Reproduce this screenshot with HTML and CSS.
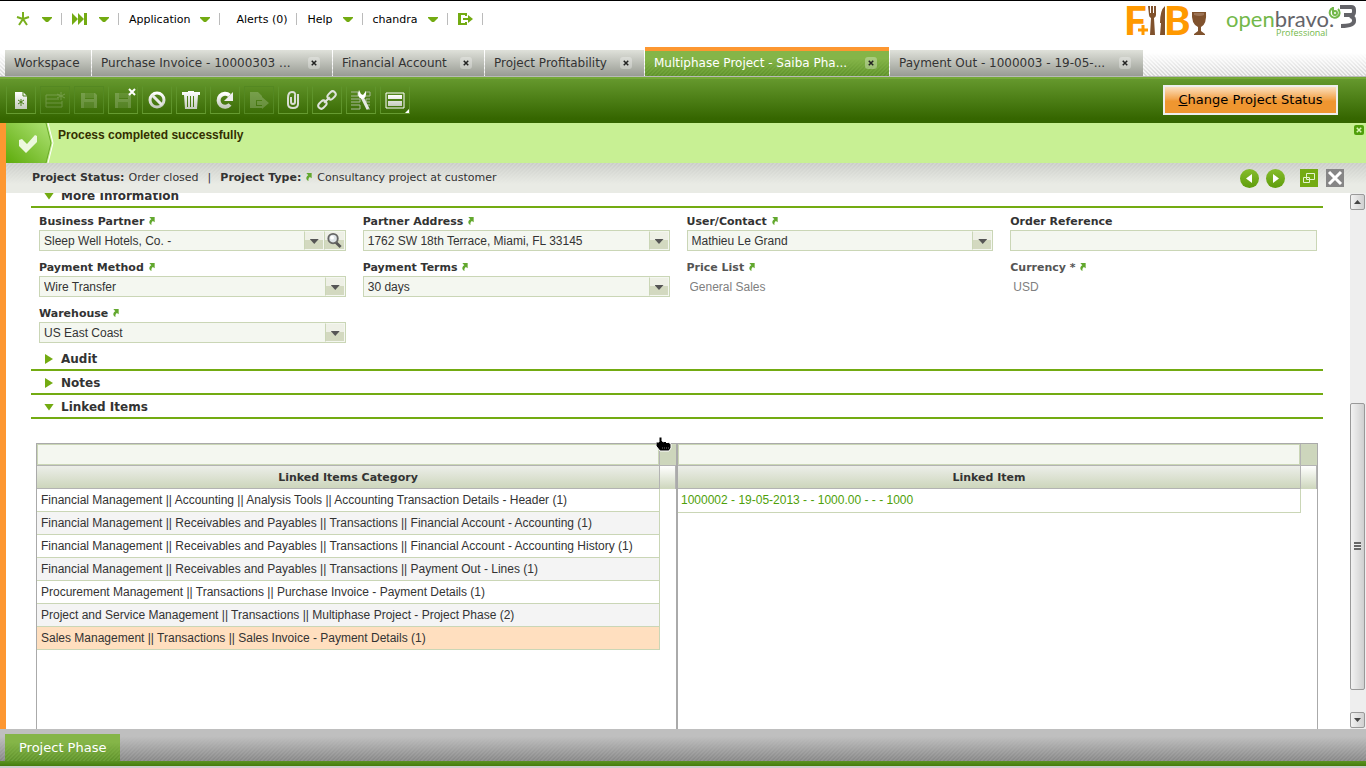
FILE: index.html
```
<!DOCTYPE html>
<html lang="en">
<head>
  <meta charset="UTF-8" />
  <meta name="viewport" content="width=device-width, initial-scale=1.0" />
  <title>Multiphase Project - Openbravo</title>
  <link rel="stylesheet" href="styles.css">
</head>

<body>

<!-- Shared icon shapes -->
<svg class="sprite" aria-hidden="true">
  <symbol id="down" viewBox="0 0 10 5"><path d="M0 0h10v1L6 5H4L0 1z" fill="#73ab12"/></symbol>
  <symbol id="goto" viewBox="0 0 8 9"><path d="M1 0h6v6L5 4.500C3.500 5.500 3 7 3.500 9 0 7.500 .5 4 3.200 2.500z" fill="#62a82e"/></symbol>
  <symbol id="cross" viewBox="0 0 8 8"><path d="M1 1l6 6M7 1L1 7" fill="none" stroke="currentColor" stroke-width="2"/></symbol>
  <linearGradient id="metal" x1="0" y1="0" x2="0" y2="1">
    <stop offset="0" stop-color="#fff"/>
    <stop offset="1" stop-color="#c4cbbd"/>
  </linearGradient>
</svg>

<!-- Top menu and logos -->
<header>
  <nav class="menu">
    <button class="menu-item icon-item" aria-label="Create new">
      <svg width="14" height="14" viewBox="0 0 14 14"><path d="M7 7V0M7 7l6-2M7 7l4 6M7 7l-4 6M7 7L1 5" stroke="#79af1d" stroke-width="2" fill="none"/></svg>
      <svg class="caret"><use href="#down"/></svg>
    </button>
    <button class="menu-item icon-item" aria-label="Quick launch">
      <svg width="15" height="12" viewBox="0 0 15 12"><path d="M0 0l6 6V0l6 6V0h3v12h-3V6l-6 6V6l-6 6z" fill="#73ab12"/></svg>
      <svg class="caret"><use href="#down"/></svg>
    </button>
    <button class="menu-item">Application <svg class="caret"><use href="#down"/></svg></button>
    <button class="menu-item alerts">Alerts (0)</button>
    <button class="menu-item">Help <svg class="caret"><use href="#down"/></svg></button>
    <button class="menu-item">chandra <svg class="caret"><use href="#down"/></svg></button>
    <button class="menu-item" aria-label="Log out">
      <svg width="15" height="12" viewBox="0 0 15 12"><path d="M9 0H0v12h9V9H7v1H3V2h4v1h2zM5 5h5V2l5 4-5 4V7H5z" fill="#73ab12"/></svg>
    </button>
  </nav>
  <div class="logos">
    <svg width="81" height="32" viewBox="0 0 81 32" role="img" aria-label="F and B">
      <g class="logo-fb">
        <text x="-3" y="30">F</text>
        <text x="37" y="30">B</text>
      </g>
      <path d="M16 19v12M10 25h12" stroke="#fff" stroke-width="5"/>
      <path d="M16 20v10M11 25h10" stroke="#ff9900" stroke-width="3"/>
      <path d="M21 1h2v7h1V1h2v7h1V1h2v9q0 2-2 3l1 17h-5l1-17q-2-1-2-3zM38 1q-5 4-5 17h1l-1 12h5z" fill="#80522d"/>
      <path d="M65 7h14q1 12-5 15v4l4 3v1H67v-1l4-3v-4q-7-3-6-15z" fill="#80522d"/>
      <path d="M67 8h10v2q-4 2-10 0z" fill="#9c7456"/>
    </svg>
    <svg width="132" height="34" viewBox="0 0 132 34" role="img" aria-label="openbravo 3 Professional">
      <text x="0" y="22" class="logo-open">open<tspan class="logo-bravo">bravo.</tspan></text>
      <text x="50" y="31" class="logo-edition">Professional</text>
      <path d="M107 3a5 5 0 1 0 5 1" fill="none" stroke="#73b84a" stroke-width="2"/>
      <path d="M107 2v6" stroke="#73b84a" stroke-width="2"/>
      <circle cx="109" cy="8" r="2" fill="none" stroke="#73b84a" stroke-width="2"/>
      <path d="M114 2h11q3 0 3 3v2q0 3-3 3h-7" fill="none" stroke="#646469" stroke-width="4"/>
      <path d="M124 11q4 1 4 4v1q0 5-13 5" fill="none" stroke="#646469" stroke-width="4"/>
    </svg>
  </div>
</header>

<!-- Open tabs -->
<nav class="tabs">
  <a class="tab tab-xs" href="#">Workspace</a>
  <div class="tab tab-l"><a href="#">Purchase Invoice - 10000303 ...</a><button aria-label="Close tab"><svg><use href="#cross"/></svg></button></div>
  <div class="tab tab-s"><a href="#">Financial Account</a><button aria-label="Close tab"><svg><use href="#cross"/></svg></button></div>
  <div class="tab tab-m"><a href="#">Project Profitability</a><button aria-label="Close tab"><svg><use href="#cross"/></svg></button></div>
  <div class="tab tab-l active"><a href="#">Multiphase Project - Saiba Pha...</a><button aria-label="Close tab"><svg><use href="#cross"/></svg></button></div>
  <div class="tab tab-xl"><a href="#">Payment Out - 1000003 - 19-05-...</a><button aria-label="Close tab"><svg><use href="#cross"/></svg></button></div>
</nav>

<!-- Toolbar -->
<div class="toolbar">
  <button class="tool" aria-label="New"><svg viewBox="0 0 20 20"><path d="M4 2h8l4 4v13H4z" fill="url(#metal)"/><path d="M12 2v4h4" fill="none" stroke="#4b8019"/><path d="M10 9v7M7 10l6 4M13 10l-6 4" stroke="#4b8019"/></svg></button>
  <button class="tool" disabled aria-label="New in grid"><svg viewBox="0 0 20 20"><path d="M1 5h14M1 5v12h16v-6M1 9h13M1 13h16M16 2v8M12 4l8 4M20 4l-8 4" fill="none" stroke="#fff"/></svg></button>
  <button class="tool" disabled aria-label="Save"><svg viewBox="0 0 20 20"><path d="M2 3h14l2 2v13H2zM6 3v6h9V3zM5 12v6h10v-6z" fill="#fff" fill-rule="evenodd"/><path d="M5 3h11v5H5zM5 12h11v6H5z" fill="#fff" opacity=".5"/></svg></button>
  <button class="tool" aria-label="Save and close"><svg viewBox="0 0 20 20" class="dim"><path d="M2 3h14l2 2v13H2zM6 3v6h9V3zM5 12v6h10v-6z" fill="#fff" fill-rule="evenodd"/><path d="M5 3h11v5H5zM5 12h11v6H5z" fill="#fff" opacity=".5"/></svg><svg class="corner-cross"><use href="#cross"/></svg></button>
  <button class="tool" aria-label="Undo"><svg viewBox="0 0 20 20"><circle cx="10" cy="10" r="7" fill="none" stroke="url(#metal)" stroke-width="3"/><path d="M5 5l10 10" stroke="#e8ebe5" stroke-width="3"/></svg></button>
  <button class="tool" aria-label="Delete"><svg viewBox="0 0 20 20"><path d="M1 2h6V1h6v1h6v3h-2l-1 14H4L3 5H1zM6 6v11h1V6zM9 6v11h1V6zM12 6v11h1V6z" fill="url(#metal)" fill-rule="evenodd"/></svg></button>
  <button class="tool" aria-label="Refresh"><svg viewBox="0 0 20 20"><path d="M15 14.500A6.500 6.500 0 1 1 14.500 5.500" fill="none" stroke="url(#metal)" stroke-width="4"/><path d="M18 2v9H9z" fill="#eee"/></svg></button>
  <button class="tool" disabled aria-label="Export"><svg viewBox="0 0 20 20"><path d="M1 2h8l4 4v4H7v6h6v2H1zM13 7l7 6-7 6v-4H8v-4h5z" fill="#fff"/></svg></button>
  <button class="tool" aria-label="Attach"><svg viewBox="0 0 20 20"><path d="M15 4v10q0 4-5 4t-5-4V8M5 8q0-6 4-6t3 4v6q0 2-2 2t-2-2V7" fill="none" stroke="#d9ded4" stroke-width="2"/></svg></button>
  <button class="tool" aria-label="Link"><svg viewBox="0 0 20 20"><g fill="none" stroke="#dfe3db" stroke-width="2" transform="rotate(-45 10 10)"><rect x="-1" y="7" width="9" height="6" rx="3"/><rect x="12" y="7" width="9" height="6" rx="3"/><path d="M6 10h8"/></g></svg></button>
  <button class="tool" aria-label="Settings"><svg viewBox="0 0 20 20"><path d="M0 2h7v4H0M14 2h5v4h-5M0 9h9v3H0M0 15h9v4H0M19 9h-4v3h4M19 15h-3v4h3" fill="none" stroke="#a9b99b"/><path d="M11 7l6 12" stroke="#e6e9e3" stroke-width="3"/><path d="M8 0q-3 7 3 9 5-1 4-8l-3 4-2-1z" fill="#fff"/></svg></button>
  <button class="tool more" aria-label="View"><svg viewBox="0 0 20 20"><path d="M1 3h18v15H1z" fill="none" stroke="#fff"/><path d="M3 5h14v4H3zM3 11h14v5H3z" fill="url(#metal)"/></svg></button>
  <button class="process-button"><u>C</u>hange Project Status</button>
</div>

<main>
  <!-- Result message -->
  <div class="message" role="status">
    <svg width="48" height="40" viewBox="0 0 48 40">
      <linearGradient id="flag" x1="0" y1="1" x2="1" y2="0"><stop offset="0" stop-color="#5dab0b"/><stop offset="1" stop-color="#b0e376"/></linearGradient>
      <path d="M0 0h40l5 20-5 20H0z" fill="url(#flag)"/>
      <path d="M40 0l5 20-5 20" fill="none" stroke="#67a925"/>
      <path d="M42 0l5 20-5 20" fill="none" stroke="#fff"/>
      <path d="M13 17l3-1 5 5 8-9 2 1v6L20 30l-7-7z" fill="#edf8df"/>
    </svg>
    <strong>Process completed successfully</strong>
    <button class="message-close" aria-label="Close message"><svg><use href="#cross"/></svg></button>
  </div>

  <!-- Record status bar -->
  <div class="status">
    <p><b>Project Status:</b> <span>Order closed</span> <span class="divider">|</span> <b>Project Type:</b> <svg class="goto"><use href="#goto"/></svg> <span>Consultancy project at customer</span></p>
    <button class="round" aria-label="Previous record"><svg viewBox="0 0 19 19"><path d="M12 5v9L6 9.500z" fill="#fff"/></svg></button>
    <button class="round" aria-label="Next record"><svg viewBox="0 0 19 19"><path d="M7 5v9l6-4.500z" fill="#fff"/></svg></button>
    <button class="square" aria-label="Maximize"><svg viewBox="0 0 18 18"><path d="M6.500 4.500h8v6h-8zM3.500 8.500h6v5h-6z" fill="none" stroke="#e4f3d0"/></svg></button>
    <button class="square close-form" aria-label="Close record"><svg viewBox="0 0 18 18"><path d="M3 3l12 12M15 3L3 15" stroke="#fff" stroke-width="3"/></svg></button>
  </div>

  <div class="scroll">
    <div class="form">
      <h2 class="section"><span class="arrow open"></span>More Information</h2>
      <div class="fields">
        <div class="field">
          <label for="partner">Business Partner <svg class="goto"><use href="#goto"/></svg></label>
          <div class="combo">
            <select id="partner"><option>Sleep Well Hotels, Co. -</option></select><span class="picker"></span>
            <button class="search" aria-label="Search partner"><svg viewBox="0 0 18 18"><path d="M10 10l6 6" stroke="#555" stroke-width="3"/><circle cx="8" cy="7" r="5" fill="#dfe5e8" stroke="#666" stroke-width="2"/><circle cx="7" cy="6" r="2" fill="#fff"/></svg></button>
          </div>
        </div>
        <div class="field">
          <label for="address">Partner Address <svg class="goto"><use href="#goto"/></svg></label>
          <div class="combo"><select id="address"><option>1762 SW 18th Terrace, Miami, FL 33145</option></select><span class="picker"></span></div>
        </div>
        <div class="field">
          <label for="contact">User/Contact <svg class="goto"><use href="#goto"/></svg></label>
          <div class="combo"><select id="contact"><option>Mathieu Le Grand</option></select><span class="picker"></span></div>
        </div>
        <div class="field">
          <label for="reference">Order Reference</label>
          <div class="combo"><input type="text" id="reference" /></div>
        </div>
        <div class="field">
          <label for="method">Payment Method <svg class="goto"><use href="#goto"/></svg></label>
          <div class="combo"><select id="method"><option>Wire Transfer</option></select><span class="picker"></span></div>
        </div>
        <div class="field">
          <label for="terms">Payment Terms <svg class="goto"><use href="#goto"/></svg></label>
          <div class="combo"><select id="terms"><option>30 days</option></select><span class="picker"></span></div>
        </div>
        <div class="field readonly">
          <label for="pricelist">Price List <svg class="goto"><use href="#goto"/></svg></label>
          <div class="combo"><input type="text" id="pricelist" value="General Sales" readonly /></div>
        </div>
        <div class="field readonly">
          <label for="currency">Currency * <svg class="goto"><use href="#goto"/></svg></label>
          <div class="combo"><input type="text" id="currency" value="USD" readonly /></div>
        </div>
        <div class="field">
          <label for="warehouse">Warehouse <svg class="goto"><use href="#goto"/></svg></label>
          <div class="combo"><select id="warehouse"><option>US East Coast</option></select><span class="picker"></span></div>
        </div>
      </div>
      <h2 class="section"><span class="arrow"></span>Audit</h2>
      <h2 class="section"><span class="arrow"></span>Notes</h2>
      <h2 class="section"><span class="arrow open"></span>Linked Items</h2>

      <!-- Linked items grids -->
      <div class="linked">
        <div class="pane">
          <table>
            <thead>
              <tr class="filter"><td><input type="text" aria-label="Filter category" /></td><td class="gutter"></td></tr>
              <tr><th>Linked Items Category</th><th class="gutter"></th></tr>
            </thead>
            <tbody>
              <tr><td>Financial Management || Accounting || Analysis Tools || Accounting Transaction Details - Header (1)</td></tr>
              <tr><td>Financial Management || Receivables and Payables || Transactions || Financial Account - Accounting (1)</td></tr>
              <tr><td>Financial Management || Receivables and Payables || Transactions || Financial Account - Accounting History (1)</td></tr>
              <tr><td>Financial Management || Receivables and Payables || Transactions || Payment Out - Lines (1)</td></tr>
              <tr><td>Procurement Management || Transactions || Purchase Invoice - Payment Details (1)</td></tr>
              <tr><td>Project and Service Management || Transactions || Multiphase Project - Project Phase (2)</td></tr>
              <tr class="selected"><td>Sales Management || Transactions || Sales Invoice - Payment Details (1)</td></tr>
            </tbody>
          </table>
          <svg class="pointer" viewBox="0 0 16 16"><path d="M3 1h3v4l2 1 1-1 2 2 1-1 3 2v4l-2 3H4L0 10V6h3z" fill="#000" stroke="#fff"/><path d="M6 12h7" stroke="#777" stroke-dasharray="1 1"/></svg>
        </div>
        <div class="pane">
          <table>
            <thead>
              <tr class="filter"><td><input type="text" aria-label="Filter item" /></td><td class="gutter"></td></tr>
              <tr><th>Linked Item</th><th class="gutter"></th></tr>
            </thead>
            <tbody>
              <tr><td class="item"><a href="#">1000002 - 19-05-2013 - - 1000.00 - - - 1000</a></td></tr>
            </tbody>
          </table>
        </div>
      </div>
    </div>

    <div class="scrollbar" aria-hidden="true">
      <span class="scroll-button"><i class="up"></i></span>
      <span class="track-before"></span>
      <span class="thumb"><i></i></span>
      <span class="track-after"></span>
      <span class="scroll-button"><i class="dn"></i></span>
    </div>
  </div>
</main>

<!-- Child tabs -->
<footer>
  <button class="child-tab">Project Phase</button>
</footer>

</body>
</html>
```
FILE: styles.css
```
/* =========================
   General Page Styling
   ========================= */
* {
  box-sizing: border-box;
}

body {
  margin: 0;
  height: 100vh;
  display: flex;
  flex-direction: column;
  overflow: hidden;
  border-top: 1px solid #000;
  font-family: "DejaVu Sans", sans-serif;
  font-size: 11px;
  color: #333;
  background-color: #fff;
}

button {
  margin: 0;
  padding: 0;
  border: none;
  background: none;
  font: inherit;
  color: inherit;
  cursor: pointer;
}

a {
  color: inherit;
  text-decoration: none;
}

svg {
  display: block;
}

.sprite {
  position: absolute;
  width: 0;
  height: 0;
}

/* =========================
   Header
   ========================= */
header {
  display: flex;
  justify-content: space-between;
  height: 46px;
  flex: none;
}

.menu {
  display: flex;
  align-items: center;
  height: 36px;
  padding-left: 6px;
  color: #000;
}

.menu-item {
  display: flex;
  align-items: center;
  gap: 10px;
  height: 12px;
  padding: 0 9px 0 10px;
  border-right: 1px solid #bbb;
}

.menu-item.icon-item {
  gap: 12px;
}

.menu-item.alerts {
  padding-left: 16px;
}

.caret {
  width: 10px;
  height: 5px;
}

.logos {
  display: flex;
  gap: 18px;
  padding: 4px 8px 0 0;
}

.logos svg {
  overflow: visible;
}

.logo-fb {
  font: 900 40px Lato, sans-serif;
  fill: #ff9900;
}

.logo-open {
  font: 22px Lato, sans-serif;
  fill: #73b84a;
}

.logo-bravo {
  fill: #646469;
}

.logo-edition {
  font: 9px "Open Sans", sans-serif;
  fill: #73b84a;
}

/* =========================
   Tabs
   ========================= */
.tabs {
  display: flex;
  align-items: flex-end;
  gap: 1px;
  flex: none;
  height: 30px;
  padding-left: 5px;
  border-bottom: 1px solid #b9bab8;
  font-size: 12px;
  background:
    linear-gradient(#fff 20%, rgba(255, 255, 255, 0.2)),
    linear-gradient(45deg, #ccc 25%, #eee 25% 50%, #ccc 50% 75%, #eee 75%) 0 0 / 4px 4px;
}

.tab {
  display: flex;
  align-items: center;
  justify-content: space-between;
  height: 26px;
  padding: 0 12px 0 9px;
  white-space: nowrap;
  background: linear-gradient(#dfe1da, #989b93);
}

.tab-xs {
  width: 86px;
}

.tab-s {
  width: 151px;
}

.tab-m {
  width: 159px;
}

.tab-l {
  width: 240px;
}

.tab-xl {
  width: 253px;
}

.tab.active {
  width: 244px;
  height: 29px;
  padding-bottom: 1px;
  border-top: 4px solid #fd9731;
  color: #fff;
  background:
    linear-gradient(#85b548 30%, rgba(110, 160, 55, 0.5)),
    linear-gradient(-45deg, #4f821f 25%, #679c35 25% 50%, #4f821f 50% 75%, #679c35 75%) 0 0 / 4px 4px;
}

.tab button {
  width: 12px;
  height: 12px;
  padding: 3px;
  border-radius: 3px;
  color: #222;
  background-color: rgba(255, 255, 255, 0.3);
}

.tab button svg {
  width: 6px;
  height: 6px;
}

/* =========================
   Toolbar
   ========================= */
.toolbar {
  display: flex;
  align-items: center;
  gap: 4px;
  flex: none;
  height: 46px;
  padding: 0 28px 2px 6px;
  border-top: 2px solid #75a937;
  background: linear-gradient(#65982d, #356600 90%);
}

.tool {
  position: relative;
  width: 30px;
  height: 28px;
  padding: 3px 4px;
  border: 1px solid;
  border-color: #5a8f25 #5f942b #669b31;
}

.tool svg {
  width: 20px;
  height: 20px;
}

.tool:disabled {
  border-color: #548822;
}

.tool:disabled svg,
.tool .dim {
  opacity: 0.2;
}

.tool .corner-cross {
  position: absolute;
  top: 1px;
  right: 1px;
  width: 8px;
  height: 8px;
  color: #fff;
}

.tool.more::after {
  content: "";
  position: absolute;
  right: 0;
  bottom: 0;
  border: 2px solid;
  border-color: transparent #fff #fff transparent;
}

.process-button {
  width: 175px;
  height: 30px;
  margin-left: auto;
  border: 2px solid #eee;
  font-size: 13px;
  line-height: 24px;
  color: #000;
  background: linear-gradient(#fce0bf, #f3a650 45%, #ef9630 55%);
}

/* =========================
   Message and Status
   ========================= */
main {
  display: flex;
  flex-direction: column;
  flex: 1;
  min-height: 0;
  border-left: 6px solid #fd9731;
}

.message {
  display: flex;
  flex: none;
  gap: 4px;
  height: 40px;
  background-color: #c8f094;
}

.message strong {
  flex: 1;
  padding-top: 5px;
  font: bold 12px/14px "Liberation Sans", sans-serif;
  color: #332f00;
}

.message-close {
  width: 10px;
  height: 10px;
  margin: 2px 2px 0 0;
  padding: 2px;
  border-radius: 2px;
  color: #d8f5b5;
  background-color: #4f9f0a;
}

.message-close svg {
  width: 6px;
  height: 6px;
}

.status {
  display: flex;
  align-items: center;
  flex: none;
  height: 30px;
  padding: 0 22px 0 26px;
  background:
    linear-gradient(rgba(200, 202, 198, 0.7), #e9ebe5 70%),
    linear-gradient(-45deg, #d0d2cd 25%, #e9ebe5 25% 50%, #d0d2cd 50% 75%, #e9ebe5 75%) 0 0 / 4px 4px;
}

.status p {
  display: flex;
  align-items: center;
  gap: 4px;
  flex: 1;
  margin: 0;
  padding-bottom: 2px;
}

.status .divider {
  padding: 0 5px;
}

.goto {
  display: inline-block;
  width: 8px;
  height: 8px;
}

.round {
  width: 19px;
  height: 19px;
  margin-right: 7px;
  border-radius: 50%;
  background: linear-gradient(#86bd2c, #5f9d0c);
}

.square {
  width: 18px;
  height: 18px;
  margin-left: 8px;
  background-color: #73ab12;
}

.close-form {
  background-color: #868686;
}

/* =========================
   Form
   ========================= */
.scroll {
  display: flex;
  flex: 1;
  min-height: 0;
  overflow: hidden;
}

.form {
  flex: 1;
  min-width: 0;
  margin-top: -9px;
  padding: 0 27px 0 25px;
}

.section {
  display: flex;
  align-items: center;
  height: 24px;
  margin: 0;
  padding: 2px 0 0 12px;
  border-bottom: 2px solid #73ab12;
  font-size: 12px;
}

.arrow {
  width: 18px;
}

.arrow::before {
  content: "";
  display: block;
  width: 8px;
  height: 10px;
  margin-left: 2px;
  background-color: #73ab12;
  clip-path: polygon(0 0, 100% 50%, 0 100%);
}

.arrow.open::before {
  width: 10px;
  height: 7px;
  margin-left: 1px;
  clip-path: polygon(0 0, 100% 0, 50% 100%);
}

.fields {
  display: grid;
  grid-template-columns: repeat(4, 1fr);
  gap: 3px 17px;
  padding: 0 6px 4px 8px;
}

.field label {
  display: block;
  height: 22px;
  padding-top: 6px;
  line-height: 16px;
  font-weight: bold;
}

.combo {
  display: flex;
  height: 21px;
  border: 1px solid #cad6b6;
  background-color: #f4f7f0;
}

.combo select,
.combo input {
  flex: 1;
  min-width: 0;
  padding: 0 4px;
  border: none;
  appearance: none;
  font: 12px "Liberation Sans", sans-serif;
  color: #333;
  background: none;
}

.picker,
.search {
  width: 20px;
  border: 1px solid #f4f7f0;
  border-left: 1px solid #cad6b6;
  background: linear-gradient(#eef0e6 45%, #d3d9c0 50%);
}

.picker::before {
  content: "";
  display: block;
  width: 9px;
  height: 5px;
  margin: 7px 0 0 5px;
  background-color: #555;
  clip-path: polygon(0 0, 100% 0, 50% 100%);
}

.search {
  width: 21px;
}

.search svg {
  width: 18px;
  height: 17px;
}

.readonly label {
  color: #555;
}

.readonly .combo {
  border-color: transparent;
  background: none;
}

.readonly input {
  padding: 0 2px;
  color: #808080;
}

/* =========================
   Linked Items
   ========================= */
.linked {
  display: flex;
  min-height: 400px;
  margin: 24px 5px 0;
  border: 1px solid #aaa;
}

.pane {
  position: relative;
  flex: 1;
}

.pane + .pane {
  border-left: 2px solid #aaa;
}

table {
  width: 100%;
  table-layout: fixed;
  border-spacing: 0;
}

td,
th {
  height: 23px;
  padding: 0 4px;
  border-right: 1px solid #cad6b6;
  border-bottom: 1px solid #cad6b6;
  white-space: nowrap;
}

th {
  font-size: 11px;
  border-color: #b3b3b3;
  background: linear-gradient(#eceee9, #cdd6bc);
}

tbody td {
  font: 12px "Liberation Sans", sans-serif;
}

tbody tr:nth-child(even) td {
  background-color: #f4f4f4;
}

tbody tr.selected td {
  background-color: #ffdfbf;
}

tbody td.item {
  height: 24px;
  padding: 0 3px 2px;
  color: #4f9f0a;
}

.filter td {
  height: 22px;
  padding: 0;
  border-color: #b3b3b3;
  background-color: #f4f7f0;
}

.filter input {
  display: block;
  width: 100%;
  height: 21px;
  border: 1px solid #cad6b6;
  background: none;
}

td.gutter,
th.gutter {
  width: 16px;
  padding: 0;
}

.filter td.gutter {
  border-right: none;
  background-color: #cdd6bc;
}

th.gutter {
  border-bottom: none;
  background: linear-gradient(#fff, #cdd6bc);
}

/* Hand cursor over the grid corner */
.pointer {
  position: absolute;
  top: -8px;
  right: 4px;
  width: 16px;
  height: 16px;
}

/* =========================
   Scrollbar
   ========================= */
.scrollbar {
  display: flex;
  flex-direction: column;
  width: 16px;
  padding: 1px 1px 1px 0;
  background-color: #eee;
}

.scroll-button,
.thumb {
  display: flex;
  align-items: center;
  justify-content: center;
  border: 1px solid #999;
  border-radius: 2px;
  background: linear-gradient(to right, #f2f2f2, #d0d0d0);
}

.scroll-button {
  height: 16px;
}

.scroll-button i {
  width: 7px;
  height: 4px;
  background-color: #444;
}

.up {
  clip-path: polygon(50% 0, 100% 100%, 0 100%);
}

.dn {
  clip-path: polygon(0 0, 100% 0, 50% 100%);
}

.track-before {
  flex: 194;
}

.thumb {
  flex: 287;
}

.thumb i {
  width: 7px;
  height: 8px;
  background: repeating-linear-gradient(#666 0 2px, #eee 2px 3px);
}

.track-after {
  flex: 22;
}

/* =========================
   Footer
   ========================= */
footer {
  display: flex;
  align-items: flex-end;
  flex: none;
  height: 39px;
  padding: 0 5px;
  border-bottom: 2px solid #ccc;
  background:
    linear-gradient(#5b9322, #447c0c) bottom / 100% 5px no-repeat,
    linear-gradient(#bfbfbf 20%, rgba(135, 135, 135, 0.5)),
    linear-gradient(-45deg, #707070 25%, #8a8a8a 25% 50%, #707070 50% 75%, #8a8a8a 75%) 0 0 / 4px 4px;
}

.child-tab {
  height: 27px;
  margin-bottom: 5px;
  padding: 0 14px;
  font-size: 13px;
  color: #fff;
  background:
    linear-gradient(#85b548 30%, rgba(110, 160, 55, 0.5)),
    linear-gradient(-45deg, #4f821f 25%, #679c35 25% 50%, #4f821f 50% 75%, #679c35 75%) 0 0 / 4px 4px;
}
```
